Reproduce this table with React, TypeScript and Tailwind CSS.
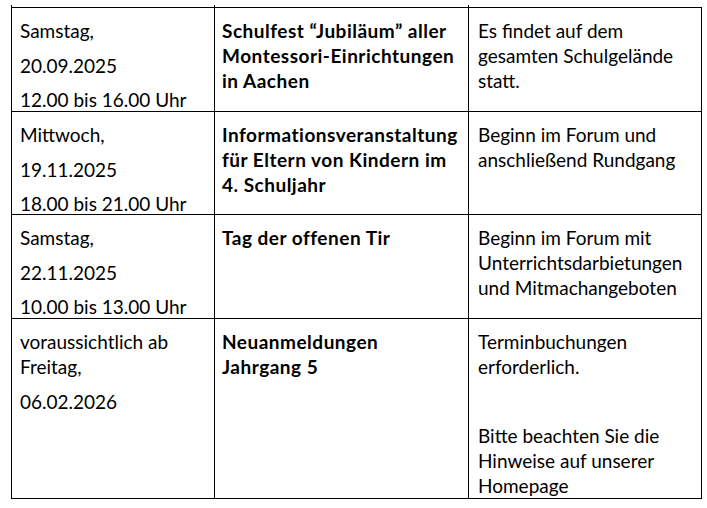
const rows = [
  {
    date: [['Samstag,'], ['20.09.2025'], ['12.00 bis 16.00 Uhr']],
    title: ['Schulfest “Jubiläum” aller', 'Montessori-Einrichtungen', 'in Aachen'],
    note: [['Es findet auf dem', 'gesamten Schulgelände', 'statt.']],
    h: 'h-[104px]',
  },
  {
    date: [['Mittwoch,'], ['19.11.2025'], ['18.00 bis 21.00 Uhr']],
    title: ['Informationsveranstaltung', 'für Eltern von Kindern im', '4. Schuljahr'],
    note: [['Beginn im Forum und', 'anschließend Rundgang']],
    h: 'h-[103px]',
  },
  {
    date: [['Samstag,'], ['22.11.2025'], ['10.00 bis 13.00 Uhr']],
    title: ['Tag der offenen Tir'],
    note: [['Beginn im Forum mit', 'Unterrichtsdarbietungen', 'und Mitmachangeboten']],
    h: 'h-[104px]',
  },
  {
    date: [['voraussichtlich ab', 'Freitag,'], ['06.02.2026']],
    title: ['Neuanmeldungen', 'Jahrgang 5'],
    note: [['Terminbuchungen', 'erforderlich.'], [''], ['Bitte beachten Sie die', 'Hinweise auf unserer', 'Homepage']],
    h: 'h-[181px] border-b',
  },
]

function Para({ lines }: { lines: string[] }) {
  return (
    <p className="mb-[9.5px] whitespace-nowrap leading-[25px]">
      {lines.map((l, i) => (
        <span key={i} className="block h-[25px]">
          {l}
        </span>
      ))}
    </p>
  )
}

export default function App() {
  return (
    <div className="min-h-[508px] bg-white pl-[11px] pt-[5px] text-[19px] text-black" style={{ fontFamily: 'Lato, "Open Sans", sans-serif' }}>
      {/* little stubs where the column lines poke above the top rule */}
      <div className="flex h-[2px]">
        <div className="w-[203px] border-l border-black" />
        <div className="w-[254px] border-l border-black" />
        <div className="w-[234px] border-l border-black" />
      </div>

      <div className="grid w-[691px] grid-cols-[203px_254px_234px]">
        {rows.map((r, i) => (
          <div key={i} className="contents">
            <div className={`${r.h} overflow-hidden border-l border-t border-black pl-[8px] pt-[10px]`}>
              {r.date.map((p, j) => (
                <Para key={j} lines={p} />
              ))}
            </div>
            <div className={`${r.h} overflow-hidden border-l border-t border-black pl-[7px] pt-[10px] font-bold tracking-[0.5px]`}>
              <Para lines={r.title} />
            </div>
            <div className={`${r.h} overflow-hidden border-l border-r border-t border-black pl-[9px] pt-[10px]`}>
              {r.note.map((p, j) => (
                <Para key={j} lines={p} />
              ))}
            </div>
          </div>
        ))}
      </div>
    </div>
  )
}
